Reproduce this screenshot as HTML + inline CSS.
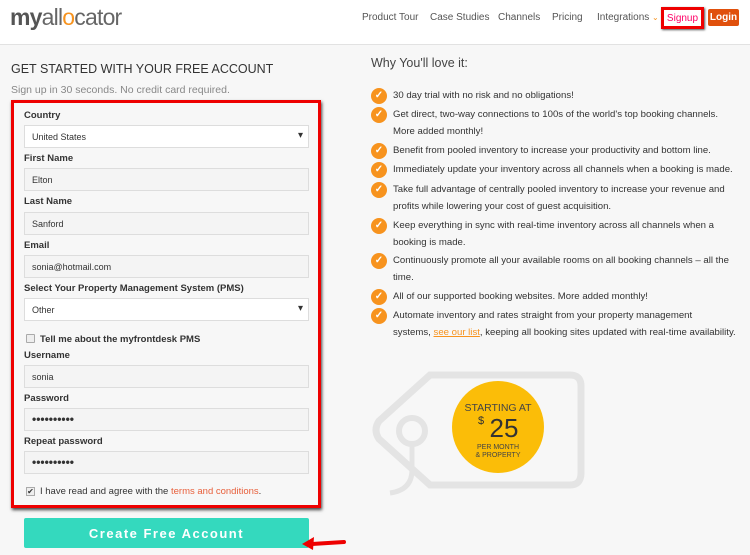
<!DOCTYPE html>
<html><head><meta charset="utf-8"><style>
*{box-sizing:border-box;margin:0;padding:0}
body{width:750px;height:555px;overflow:hidden;background:#f7f7f7;font-family:"Liberation Sans",sans-serif;color:#333;position:relative}
.a{position:absolute}
.hdr{left:0;top:0;width:750px;height:45px;background:#fff;border-bottom:1px solid #e2e2e2}
.nav{top:12px;font-size:10px;color:#555}
.lbl{left:24px;font-size:9.5px;font-weight:bold;color:#333}
.in{left:24px;width:285px;height:23px;border:1px solid #ddd;background:#f4f4f4;font-size:9px;padding:6px 0 0 7px;color:#333}
.sel{background:#fff}
.sel:after{content:"▾";position:absolute;right:5px;top:4px;font-size:10px}
.dots{font-size:12px;letter-spacing:0;padding-top:3px;font-weight:bold}
.li{left:371px;font-size:9.6px;line-height:16.5px;color:#333;width:370px;white-space:nowrap}
.ck{position:absolute;left:0;top:0;width:16px;height:16px;border-radius:50%;background:#f7931e;color:#fff;font-size:10px;text-align:center;line-height:16px;font-weight:bold}
.li span.t{display:block;padding-left:22px}
</style></head><body>
<div class="a hdr"></div>
<div class="a" style="left:10px;top:4px;font-size:23px;color:#666;letter-spacing:-0.8px"><span style="color:#555;font-weight:bold">my</span>all<span style="color:#f7931e">o</span>cator</div>
<div class="a nav" style="left:362px">Product Tour</div>
<div class="a nav" style="left:430px">Case Studies</div>
<div class="a nav" style="left:498px">Channels</div>
<div class="a nav" style="left:552px">Pricing</div>
<div class="a nav" style="left:597px">Integrations <span style="color:#f7931e;font-size:8px">⌄</span></div>
<div class="a" style="left:661px;top:7px;width:43px;height:22px;border:3px solid #e00;box-shadow:1px 1px 2px #555;font-size:10px;color:#f06;padding-top:3px;text-align:center;background:#fff">Signup</div>
<div class="a" style="left:708px;top:9px;width:31px;height:17px;background:#e0500c;border-radius:2px;color:#fff;font-size:10px;font-weight:bold;text-align:center;padding-top:3px">Login</div>

<div class="a" style="left:11px;top:62px;font-size:12.5px;color:#333">GET STARTED WITH YOUR FREE ACCOUNT</div>
<div class="a" style="left:11px;top:84px;font-size:10.5px;color:#888">Sign up in 30 seconds. No credit card required.</div>
<div class="a" style="left:11px;top:100px;width:310px;height:408px;border:3px solid #e00;box-shadow:1px 2px 3px #444"></div>

<div class="a lbl" style="top:110px">Country</div>
<div class="a in sel" style="top:125px">United States</div>
<div class="a lbl" style="top:153px">First Name</div>
<div class="a in" style="top:168px">Elton</div>
<div class="a lbl" style="top:196px">Last Name</div>
<div class="a in" style="top:212px">Sanford</div>
<div class="a lbl" style="top:240px">Email</div>
<div class="a in" style="top:255px">sonia@hotmail.com</div>
<div class="a lbl" style="top:283px">Select Your Property Management System (PMS)</div>
<div class="a in sel" style="top:298px">Other</div>
<div class="a" style="left:26px;top:334px;width:9px;height:9px;border:1px solid #aaa;background:#eee;border-radius:1px"></div>
<div class="a lbl" style="left:40px;top:334px">Tell me about the myfrontdesk PMS</div>
<div class="a lbl" style="top:350px">Username</div>
<div class="a in" style="top:365px">sonia</div>
<div class="a lbl" style="top:393px">Password</div>
<div class="a in dots" style="top:408px">••••••••••</div>
<div class="a lbl" style="top:436px">Repeat password</div>
<div class="a in dots" style="top:451px">••••••••••</div>
<div class="a" style="left:26px;top:487px;width:9px;height:9px;border:1px solid #aaa;background:#eee;font-size:8px;line-height:8px;text-align:center">✔</div>
<div class="a lbl" style="left:40px;top:486px;font-weight:normal;color:#333">I have read and agree with the <span style="color:#e8603c">terms and conditions</span>.</div>
<div class="a" style="left:24px;top:518px;width:285px;height:30px;background:#34d9be;border-radius:2px;color:#fff;font-size:13px;font-weight:bold;letter-spacing:1.5px;text-align:center;padding-top:8px">Create Free Account</div>
<svg class="a" style="left:298px;top:532px" width="50" height="20"><path d="M46 10 L14 12" stroke="#e00" stroke-width="4" stroke-linecap="round"/><path d="M4 12 L16 5 L15 18 Z" fill="#e00"/></svg>

<div class="a" style="left:371px;top:56px;font-size:12.5px;color:#444">Why You'll love it:</div>
<div class="a li" style="top:88px"><div class="ck">✓</div><span class="t">30 day trial with no risk and no obligations!</span></div>
<div class="a li" style="top:107px"><div class="ck">✓</div><span class="t">Get direct, two-way connections to 100s of the world's top booking channels.<br>More added monthly!</span></div>
<div class="a li" style="top:143px"><div class="ck">✓</div><span class="t">Benefit from pooled inventory to increase your productivity and bottom line.</span></div>
<div class="a li" style="top:162px"><div class="ck">✓</div><span class="t">Immediately update your inventory across all channels when a booking is made.</span></div>
<div class="a li" style="top:182px"><div class="ck">✓</div><span class="t">Take full advantage of centrally pooled inventory to increase your revenue and<br>profits while lowering your cost of guest acquisition.</span></div>
<div class="a li" style="top:218px"><div class="ck">✓</div><span class="t">Keep everything in sync with real-time inventory across all channels when a<br>booking is made.</span></div>
<div class="a li" style="top:253px"><div class="ck">✓</div><span class="t">Continuously promote all your available rooms on all booking channels – all the<br>time.</span></div>
<div class="a li" style="top:289px"><div class="ck">✓</div><span class="t">All of our supported booking websites. More added monthly!</span></div>
<div class="a li" style="top:308px"><div class="ck">✓</div><span class="t">Automate inventory and rates straight from your property management<br>systems, <u style="color:#f7931e">see our list</u>, keeping all booking sites updated with real-time availability.</span></div>

<svg class="a" style="left:365px;top:365px" width="230" height="190">
<path d="M65 10 H205 Q216 10 216 21 V108 Q216 120 205 120 H65 L14 74 Q8 65 14 56 Z" fill="none" stroke="#e4e4e4" stroke-width="7"/>
<circle cx="47" cy="66" r="13" fill="none" stroke="#e4e4e4" stroke-width="6"/>
<path d="M47 79 V105 Q47 125 25 128" fill="none" stroke="#e4e4e4" stroke-width="5"/>
<circle cx="133" cy="62" r="46" fill="#fbbd08"/>
<text x="133" y="46" text-anchor="middle" font-family="Liberation Sans" font-size="10.5" fill="#444">STARTING AT</text>
<text x="139" y="72" text-anchor="middle" font-family="Liberation Sans" font-size="26" fill="#333">25</text>
<text x="113" y="59" font-family="Liberation Sans" font-size="11" fill="#333">$</text>
<text x="133" y="84" text-anchor="middle" font-family="Liberation Sans" font-size="7" fill="#444">PER MONTH</text>
<text x="133" y="92" text-anchor="middle" font-family="Liberation Sans" font-size="7" fill="#444">&amp; PROPERTY</text>
</svg>
</body></html>
